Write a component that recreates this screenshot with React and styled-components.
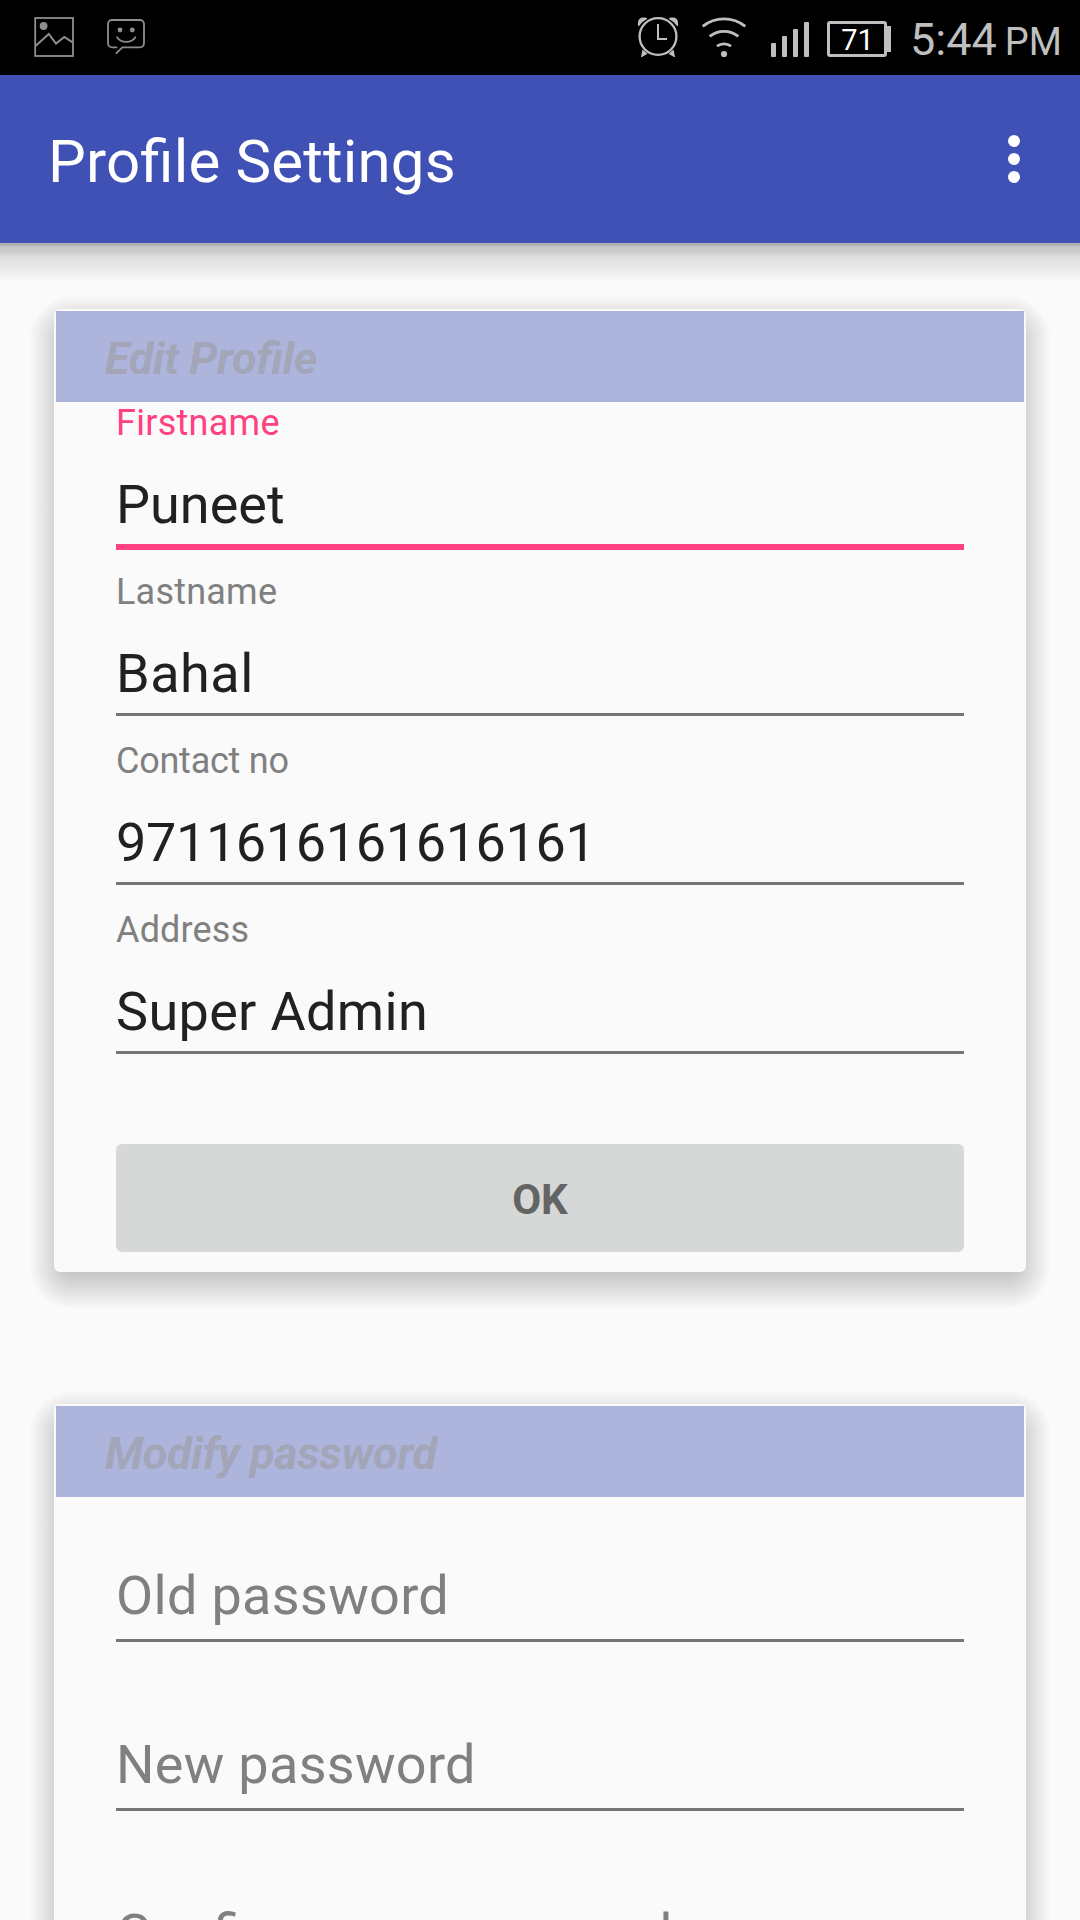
import React from 'react';
import styled, { createGlobalStyle } from 'styled-components';

const GlobalStyle = createGlobalStyle`
  * { box-sizing: border-box; }
  body { margin: 0; background: #fafafa; }
`;

const Screen = styled.div`
  display: flex;
  flex-direction: column;
  width: 1080px;
  height: 1920px;
  overflow: hidden;
  background: #fafafa;
  font-family: Roboto, "Liberation Sans", sans-serif;
  font-feature-settings: "liga" 1;
`;

const StatusBar = styled.div`
  flex: none;
  display: flex;
  justify-content: space-between;
  height: 75px;
  background: #000;
  color: #bfbfbf;
`;

const StatusGroup = styled.div`
  display: flex;
  align-items: flex-start;
  height: 75px;
`;

const Notifications = styled(StatusGroup)`
  padding: 16px 0 0 33px;
  gap: 31px;
  color: #8e8e8e;
`;

const Glyph = styled.svg`
  flex: none;
  display: block;
  margin-left: ${(p) => p.$gap || 0}px;
`;

const System = styled(StatusGroup)`
  padding: 16px 18px 0 0;
`;

const Battery = styled.div`
  display: flex;
  align-items: center;
  margin: 5px 0 0 18px;
`;

const BatteryBody = styled.div`
  width: 60px;
  height: 36px;
  padding-left: 1px;
  border: 3px solid #bfbfbf;
  border-radius: 3px;
  color: #fff;
  font-size: 29px;
  line-height: 32px;
  text-align: center;
`;

const BatteryCap = styled.div`
  width: 6px;
  height: 26px;
  margin-left: -2px;
  background: #bfbfbf;
`;

const Clock = styled.div`
  display: flex;
  align-items: baseline;
  margin-left: 19px;
  font-size: 45px;
  line-height: 48px;
`;

const Meridiem = styled.span`
  margin-left: 8px;
  font-size: 38px;
`;

const AppBar = styled.header`
  flex: none;
  display: flex;
  justify-content: space-between;
  height: 168px;
  padding: 0 60px 0 48px;
  background: #3f51b5;
`;

const Title = styled.h1`
  margin: 0;
  padding-top: 5px;
  color: #fff;
  font-size: 60px;
  font-weight: 400;
  letter-spacing: 0.16px;
  line-height: 163px;
`;

const MenuButton = styled.div`
  display: flex;
  flex-direction: column;
  gap: 6px;
  padding-top: 60px;
`;

const Dot = styled.span`
  width: 12px;
  height: 12px;
  border-radius: 50%;
  background: #fff;
`;

const BarShadow = styled.div`
  flex: none;
  height: 39px;
  border-top: 3px solid #b0b0b0;
  background: linear-gradient(#c6c6c6 0, #cacaca 5px, #dcdcdc 10px, #fafafa 36px);
`;

const Content = styled.main`
  flex: none;
  display: flex;
  flex-direction: column;
  gap: 132px;
  padding: 27px 54px 0;
`;

const shade = 'rgba(0,0,0,.212) 6px, rgba(0,0,0,.008) 42px, transparent 42px';
const side = 'rgba(0,0,0,.008), rgba(0,0,0,.212)';

const Card = styled.section`
  position: relative;
  z-index: 0;
  padding: 2px 2px 20px;
  border-radius: 6px;

  &::before {
    content: '';
    position: absolute;
    z-index: -2;
    inset: -12px -24px -36px;
    background:
      radial-gradient(circle at 100% 100%, ${shade}) 0 0 / 42px 42px,
      radial-gradient(circle at 0 100%, ${shade}) 100% 0 / 42px 42px,
      radial-gradient(circle at 100% 0, ${shade}) 0 100% / 42px 42px,
      radial-gradient(circle at 0 0, ${shade}) 100% 100% / 42px 42px,
      linear-gradient(to bottom, ${side}) 42px 0 / calc(100% - 84px) 36px,
      linear-gradient(to top, ${side}) 42px 100% / calc(100% - 84px) 36px,
      linear-gradient(to right, ${side}) 0 42px / 36px calc(100% - 84px),
      linear-gradient(to left, ${side}) 100% 42px / 36px calc(100% - 84px);
    background-repeat: no-repeat;
  }

  &::after {
    content: '';
    position: absolute;
    z-index: -1;
    inset: 0;
    border-radius: 6px;
    background: #fafafa;
  }
`;

const CardTitle = styled.h2`
  height: 91px;
  margin: 0;
  padding: 4px 0 0 49px;
  background: #aeb5dd;
  color: #a3a5b8;
  font-size: 45px;
  font-style: italic;
  font-weight: 700;
  letter-spacing: -0.36px;
  line-height: 87px;
`;

const Form = styled.div`
  display: flex;
  flex-direction: column;
  padding: 0 60px;
`;

const FieldBox = styled.div`
  height: 169px;
`;

const Label = styled.div`
  height: 42px;
  color: ${(p) => (p.$active ? '#ff4081' : '#808080')};
  font-size: 36px;
  letter-spacing: ${(p) => p.$tracking || 0}px;
  line-height: 42px;
`;

const Value = styled.div`
  height: ${(p) => (p.$active ? 106 : 103)}px;
  padding-top: ${(p) => (p.$hint ? 25 : 29)}px;
  border-bottom: ${(p) => (p.$active ? '6px solid #ff4081' : '3px solid #757575')};
  color: ${(p) => (p.$hint ? '#808080' : '#212121')};
  font-size: 54px;
  letter-spacing: ${(p) => p.$tracking || 0}px;
  line-height: 63px;
  white-space: nowrap;
`;

const Button = styled.button`
  height: 108px;
  margin-top: 66px;
  padding: 3px 0 0;
  border: 0;
  border-radius: 6px;
  background: #d6d8d7;
  color: #636564;
  font-family: inherit;
  font-size: 42px;
  font-weight: 700;
  line-height: 105px;
`;

function Field({ label, value, hint, active, labelTracking, tracking }) {
  return (
    <FieldBox>
      <Label $active={active} $tracking={labelTracking}>{label}</Label>
      <Value $active={active} $hint={!!hint} $tracking={tracking}>{hint || value}</Value>
    </FieldBox>
  );
}

function PictureIcon() {
  return (
    <Glyph width="42" height="42" viewBox="33 16 42 42" fill="none" stroke="currentColor" strokeWidth="1.8">
      <rect x="35.2" y="18" width="37.8" height="38" />
      <path d="M35.5 46 48.8 34 56 43.6 64.3 37 73 42.6" strokeWidth="2" />
      <circle cx="43.6" cy="26" r="3.9" fill="currentColor" stroke="none" />
    </Glyph>
  );
}

function MessageIcon() {
  return (
    <Glyph width="40" height="42" viewBox="106 16 40 42" fill="none" stroke="currentColor" strokeWidth="1.8" strokeLinecap="round">
      <path d="M116.5 47.3H112a4 4 0 0 1-4-4V24a4 4 0 0 1 4-4h28a4 4 0 0 1 4 4v19.3a4 4 0 0 1-4 4h-17.6L116.4 53.2" />
      <path d="M117 37.2c2 3 5 4.6 9.2 4.6s7.2-1.6 9.2-4.6" />
      <g fill="currentColor" stroke="none">
        <circle cx="120" cy="30" r="2.4" />
        <circle cx="132.3" cy="30" r="2.4" />
      </g>
    </Glyph>
  );
}

function AlarmIcon() {
  return (
    <Glyph width="42" height="42" viewBox="637 16 42 42" fill="none" stroke="currentColor" strokeWidth="2.3">
      <circle cx="658" cy="36.5" r="18.4" />
      <path d="M658 24v15h9" strokeWidth="2" />
      <g fill="currentColor" stroke="none">
        <path d="M638 26v-3.5a5 5 0 0 1 5-5h2.5l2 1.3a22 22 0 0 0-8.5 7.2z" />
        <path d="M678 26v-3.5a5 5 0 0 0-5-5h-2.5l-2 1.3a22 22 0 0 1 8.5 7.2z" />
        <path d="M642.5 49.5l5 4.3-5.5 3.2h-1z" />
        <path d="M673.5 49.5l-5 4.3 5.5 3.2h1z" />
      </g>
    </Glyph>
  );
}

function WifiIcon() {
  return (
    <Glyph $gap={22} width="46" height="42" viewBox="701 16 46 42" fill="none" stroke="currentColor" strokeWidth="2.8">
      <path d="M702.7 26.3a34 34 0 0 1 42.6 0" />
      <path d="M709.7 36.4a23 23 0 0 1 28.6 0" />
      <path d="M717 46.2a11.5 11.5 0 0 1 14 0" />
      <circle cx="724" cy="54" r="3.1" fill="currentColor" stroke="none" />
    </Glyph>
  );
}

function SignalIcon() {
  return (
    <Glyph $gap={24} width="38" height="42" viewBox="771 16 38 42" fill="currentColor">
      <rect x="771" y="43" width="5" height="14" rx="1" />
      <rect x="782" y="36" width="5" height="21" rx="1" />
      <rect x="793" y="29" width="5" height="28" rx="1" />
      <rect x="804" y="22" width="5" height="35" rx="1" />
    </Glyph>
  );
}

export default function App() {
  return (
    <Screen>
      <GlobalStyle />
      <StatusBar>
        <Notifications>
          <PictureIcon />
          <MessageIcon />
        </Notifications>
        <System>
          <AlarmIcon />
          <WifiIcon />
          <SignalIcon />
          <Battery>
            <BatteryBody>71</BatteryBody>
            <BatteryCap />
          </Battery>
          <Clock>
            5:44
            <Meridiem>PM</Meridiem>
          </Clock>
        </System>
      </StatusBar>
      <AppBar>
        <Title>Profile Settings</Title>
        <MenuButton>
          <Dot />
          <Dot />
          <Dot />
        </MenuButton>
      </AppBar>
      <BarShadow />
      <Content>
        <Card>
          <CardTitle>Edit Profile</CardTitle>
          <Form>
            <Field label="Firstname" labelTracking={0.27} value="Puneet" active />
            <Field label="Lastname" labelTracking={0.22} value="Bahal" tracking={0.5} />
            <Field label="Contact no" labelTracking={-0.24} value="9711616161616161" tracking={-0.38} />
            <Field label="Address" labelTracking={0.15} value="Super Admin" tracking={0.33} />
            <Button>OK</Button>
          </Form>
        </Card>
        <Card>
          <CardTitle>Modify password</CardTitle>
          <Form>
            <Field hint="Old password" tracking={0.32} />
            <Field hint="New password" tracking={0.3} />
            <Field hint="Confirm new password" tracking={0.22} />
            <Button>OK</Button>
          </Form>
        </Card>
      </Content>
    </Screen>
  );
}
